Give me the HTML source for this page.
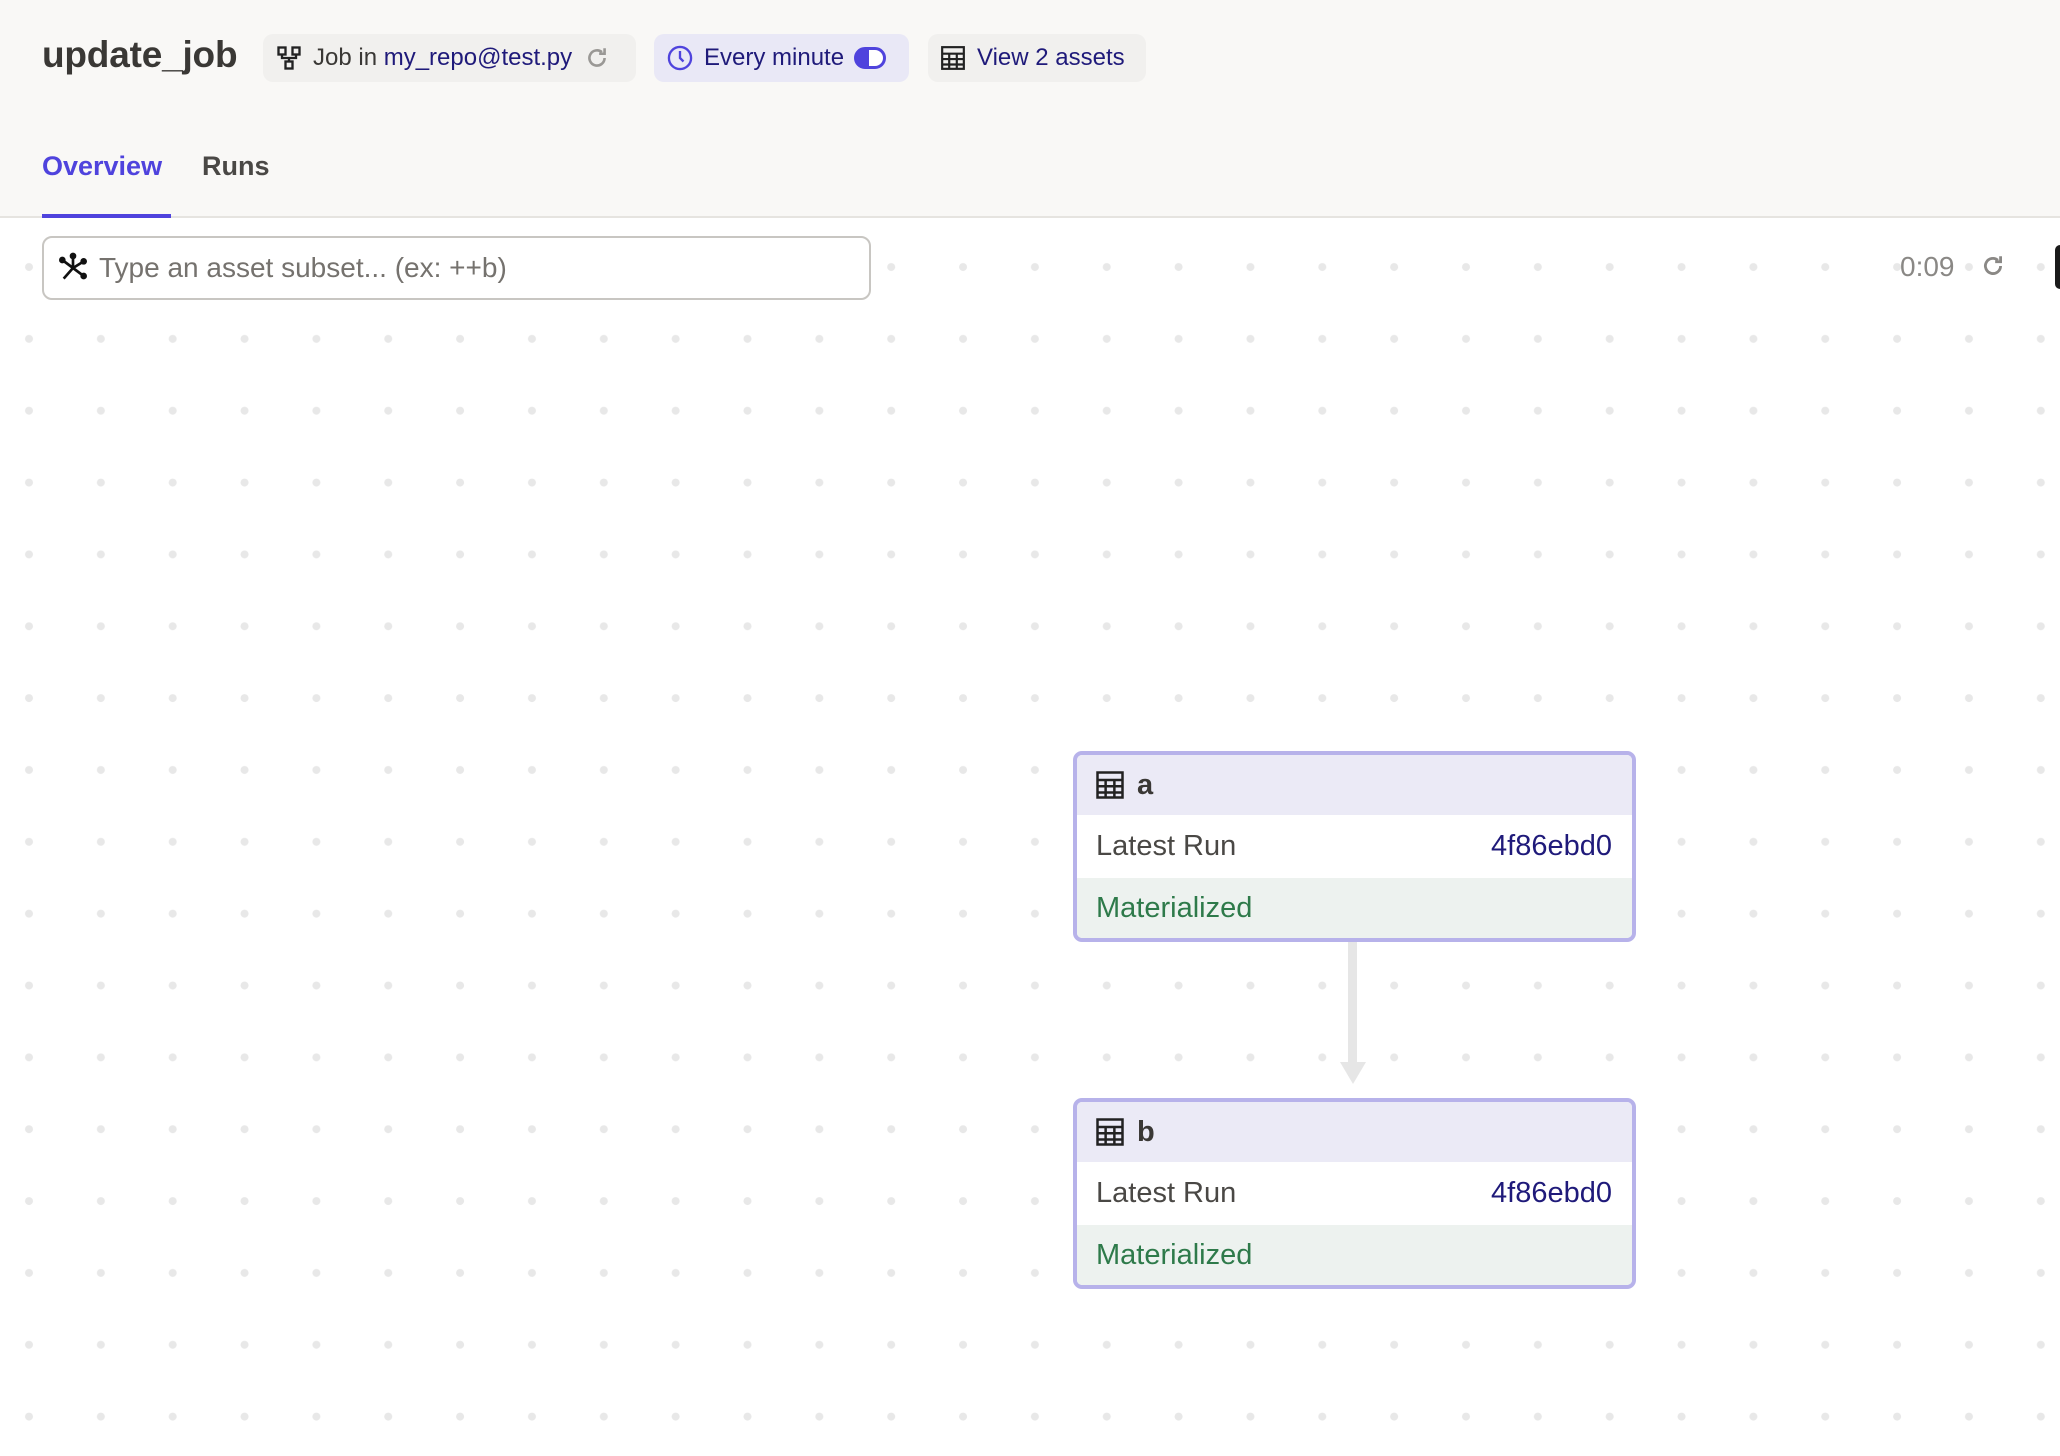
<!DOCTYPE html>
<html><head><meta charset="utf-8"><style>
*{box-sizing:border-box;margin:0;padding:0}
body{width:2060px;height:1456px;overflow:hidden;background:#fff;font-family:"Liberation Sans",sans-serif;position:relative;color:#333}
.hdr{position:absolute;left:0;top:0;width:2060px;height:218px;background:#f9f8f6;border-bottom:2px solid #e6e4e0}
.title{position:absolute;left:42px;top:34px;font-size:37px;font-weight:700;color:#3a3835;letter-spacing:-0.2px}
.chip{position:absolute;top:34px;height:48px;border-radius:10px;background:#f1f0ee;display:flex;align-items:center;font-size:24px;color:#3a3835;padding-left:12px}
.chip svg{flex:none}
.tab{position:absolute;top:151px;font-size:27px;font-weight:700}
.ul{position:absolute;left:42px;top:214px;width:129px;height:4px;background:#4f43dd}
.search{position:absolute;left:42px;top:236px;width:829px;height:64px;border:2px solid #c8c6c2;border-radius:10px;background:#fff;display:flex;align-items:center;font-size:28px;color:#75726e}
.node{position:absolute;left:1073px;width:563px;height:191px;border:4px solid #b7b2ea;border-radius:9px;overflow:hidden;background:#fff}
.nh{height:60px;background:#ebeaf6;display:flex;align-items:center;padding-left:18px;font-size:29px;font-weight:700;color:#3a3835}
.nr{height:63px;display:flex;align-items:center;justify-content:space-between;padding:0 20px 0 19px;font-size:29px;color:#4a4845}
.nr b{font-weight:400;color:#1f1a7a}
.nm{height:60px;background:#edf2ef;display:flex;align-items:center;padding-left:19px;font-size:29px;color:#2e7a4a}
</style></head><body>
<svg style="position:absolute;left:0;top:220px" width="2060" height="1236">
<defs><pattern id="d" patternUnits="userSpaceOnUse" x="-7" y="11" width="71.85" height="71.85"><circle cx="36" cy="36" r="4" fill="#e8e8e8"/></pattern></defs>
<rect width="2060" height="1236" fill="url(#d)"/>
<rect x="1348" y="722" width="9" height="134" fill="#e6e6e6"/>
<polygon points="1340,842 1366,842 1353,864" fill="#e6e6e6"/>
</svg>
<div class="hdr"></div>
<div class="title">update_job</div>
<div class="chip" style="left:263px;width:373px">
<svg width="28" height="28" viewBox="0 0 24 24" fill="none" stroke="#222" stroke-width="2"><rect x="3" y="3" width="6" height="6"/><rect x="15" y="3" width="6" height="6"/><rect x="9" y="15" width="6" height="6"/><path d="M6 9v3h12V9M12 12v3"/></svg>
<span style="margin-left:10px">Job in <span style="color:#1f1a7a">my_repo@test.py</span></span>
<svg style="margin-left:12px" width="26" height="26" viewBox="0 0 24 24" fill="none" stroke="#9a9895" stroke-width="2.4"><path d="M19 12a7 7 0 1 1-2.5-5.4"/><path d="M19 3v5h-5" /></svg>
</div>
<div class="chip" style="left:654px;width:255px;background:#e9e8f6;color:#1f1a7a">
<svg width="28" height="28" viewBox="0 0 24 24" fill="none" stroke="#4f43dd" stroke-width="2"><circle cx="12" cy="12" r="9.5"/><path d="M12 6v6l3 3"/></svg>
<span style="margin-left:10px">Every minute</span>
<svg style="margin-left:10px" width="32" height="22" viewBox="0 0 32 22"><rect x="1.5" y="1.5" width="29" height="19" rx="9.5" fill="#fff" stroke="#4f43dd" stroke-width="3"/><path d="M11 1.5a9.5 9.5 0 0 0 0 19h4v-19z" fill="#4f43dd"/></svg>
</div>
<div class="chip" style="left:928px;width:218px">
<svg width="26" height="26" viewBox="0 0 24 24" fill="none" stroke="#222" stroke-width="2"><rect x="2" y="2" width="20" height="20"/><path d="M2 8h20M2 13h20M2 18h20M8.5 8v14M15.5 8v14"/></svg>
<span style="margin-left:11px;color:#1f1a7a">View 2 assets</span>
</div>
<div class="tab" style="left:42px;color:#4f43dd">Overview</div>
<div class="tab" style="left:202px;color:#4a4845">Runs</div>
<div class="ul"></div>
<div class="search">
<svg style="margin-left:13px" width="32" height="32" viewBox="0 0 24 24" fill="none" stroke="#111" stroke-width="2"><path d="M12 12L12 3M12 12L20 7M12 12L20 18M12 12L5 20M12 12L4 6"/><circle cx="12" cy="3" r="1.5" fill="#111"/><circle cx="20" cy="7" r="1.5" fill="#111"/><circle cx="20" cy="18" r="1.5" fill="#111"/><circle cx="4" cy="6" r="1.5" fill="#111"/></svg>
<span style="margin-left:10px">Type an asset subset... (ex: ++b)</span>
</div>
<div style="position:absolute;left:1900px;top:251px;font-size:28px;color:#8a8885">0:09</div>
<svg style="position:absolute;left:1980px;top:253px" width="26" height="26" viewBox="0 0 24 24" fill="none" stroke="#8a8885" stroke-width="2.6"><path d="M19 12a7 7 0 1 1-2.5-5.4"/><path d="M19 3v5h-5"/></svg>
<div style="position:absolute;left:2055px;top:245px;width:10px;height:44px;background:#1a1a1a;border-radius:6px"></div>
<div class="node" style="top:751px">
<div class="nh"><svg width="30" height="30" viewBox="0 0 24 24" fill="none" stroke="#222" stroke-width="2"><rect x="2" y="2" width="20" height="20"/><path d="M2 8h20M2 13h20M2 18h20M8.5 8v14M15.5 8v14"/></svg><span style="margin-left:12px">a</span></div>
<div class="nr">Latest Run<b>4f86ebd0</b></div>
<div class="nm">Materialized</div>
</div>
<div class="node" style="top:1098px">
<div class="nh"><svg width="30" height="30" viewBox="0 0 24 24" fill="none" stroke="#222" stroke-width="2"><rect x="2" y="2" width="20" height="20"/><path d="M2 8h20M2 13h20M2 18h20M8.5 8v14M15.5 8v14"/></svg><span style="margin-left:12px">b</span></div>
<div class="nr">Latest Run<b>4f86ebd0</b></div>
<div class="nm">Materialized</div>
</div>
</body></html>
